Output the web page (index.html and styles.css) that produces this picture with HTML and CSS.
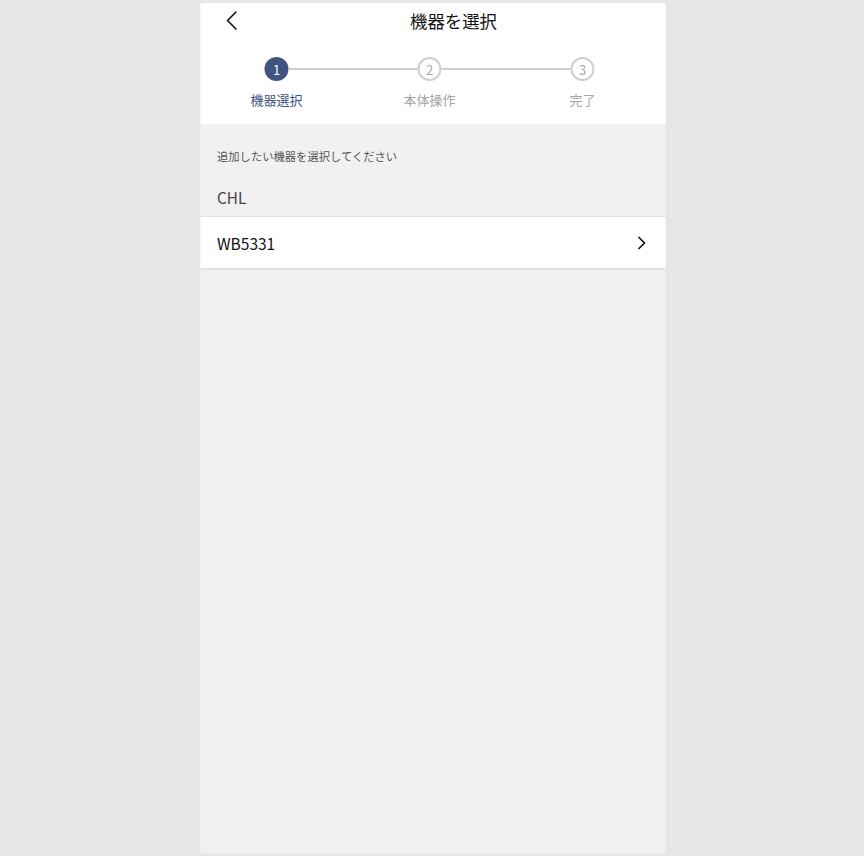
FILE: index.html
```html
<!DOCTYPE html>
<html lang="ja">
<head>
<meta charset="utf-8">
<title>機器を選択</title>
<link rel="stylesheet" href="styles.css">
</head>
<body>
<div class="phone">
  <header class="head">
    <div class="navbar">
      <button class="back" aria-label="戻る">
        <svg width="12" height="19" viewBox="0 0 12 19"><path d="M10.5 1 L2 9.5 L10.5 18" fill="none" stroke="#111" stroke-width="1.6" stroke-linecap="round" stroke-linejoin="round"/></svg>
      </button>
      <h1 class="title">機器を選択</h1>
    </div>
    <div class="steps">
      <div class="step active">
        <div class="track"><span class="line hidden"></span><span class="dot">1</span><span class="line"></span></div>
        <div class="label">機器選択</div>
      </div>
      <div class="step">
        <div class="track"><span class="line"></span><span class="dot">2</span><span class="line"></span></div>
        <div class="label">本体操作</div>
      </div>
      <div class="step">
        <div class="track"><span class="line"></span><span class="dot">3</span><span class="line hidden"></span></div>
        <div class="label">完了</div>
      </div>
    </div>
  </header>
  <p class="hint">追加したい機器を選択してください</p>
  <div class="group">CHL</div>
  <ul class="list">
    <li class="item">
      <span>WB5331</span>
      <svg width="9" height="14" viewBox="0 0 9 14"><path d="M1.5 1.5 L7 7 L1.5 12.5" fill="none" stroke="#111" stroke-width="1.7" stroke-linecap="round" stroke-linejoin="round"/></svg>
    </li>
  </ul>
</div>
</body>
</html>
```

FILE: styles.css
```css
html, body {
  margin: 0;
  padding: 0;
}
body {
  background: #e6e6e6;
  font-family: "Noto Sans CJK JP", "Noto Sans", sans-serif;
  height: 856px;
  overflow: hidden;
}
.phone {
  width: 465px;
  height: 850px;
  margin: 3px auto 0;
  background: #f1f1f1;
  transform: translateX(0.5px);
}
.head {
  background: #fff;
  height: 121px;
  box-sizing: border-box;
}
.navbar {
  height: 36px;
  display: flex;
  align-items: center;
  justify-content: center;
  padding-left: 42px;
  position: relative;
}
.back {
  position: absolute;
  left: 25px;
  top: 8px;
  border: 0;
  background: none;
  padding: 0;
  line-height: 0;
}
.title {
  margin: 0;
  font-size: 17.4px;
  font-weight: 400;
  color: #111;
  line-height: 34px;
}
.steps {
  display: grid;
  grid-template-columns: repeat(3, 153px);
  padding-top: 18px;
}
.step {
  display: flex;
  flex-direction: column;
  align-items: center;
}
.track {
  display: flex;
  align-items: center;
  width: 100%;
}
.line {
  flex: 1;
  height: 2px;
  background: #cdcdcd;
}
.line.hidden {
  visibility: hidden;
}
.dot {
  width: 24px;
  height: 24px;
  box-sizing: border-box;
  border-radius: 50%;
  border: 2px solid #cfcfcf;
  background: #fff;
  color: #a8a8a8;
  font-size: 13px;
  display: flex;
  align-items: center;
  justify-content: center;
  line-height: 1;
}
.step.active .dot {
  background: #3f5480;
  border-color: #3f5480;
  color: #fff;
}
.label {
  margin-top: 10px;
  font-size: 13px;
  line-height: 18px;
  color: #a3a3a3;
}
.step.active .label {
  color: #3f5480;
}
.hint {
  margin: 0;
  padding: 24px 17px 0;
  font-size: 11.3px;
  line-height: 16px;
  color: #555;
}
.group {
  padding: 23px 17px 0;
  font-size: 15.3px;
  line-height: 20px;
  height: 29px;
  color: #444;
  border-bottom: 1px solid #e2e2e2;
}
.list {
  list-style: none;
  margin: 0;
  padding: 0;
}
.item {
  background: #fff;
  height: 51px;
  display: flex;
  align-items: center;
  justify-content: space-between;
  padding: 0 19px 0 17px;
  font-size: 15.5px;
  color: #111;
  border-bottom: 2px solid #e2e2e2;
}
```
